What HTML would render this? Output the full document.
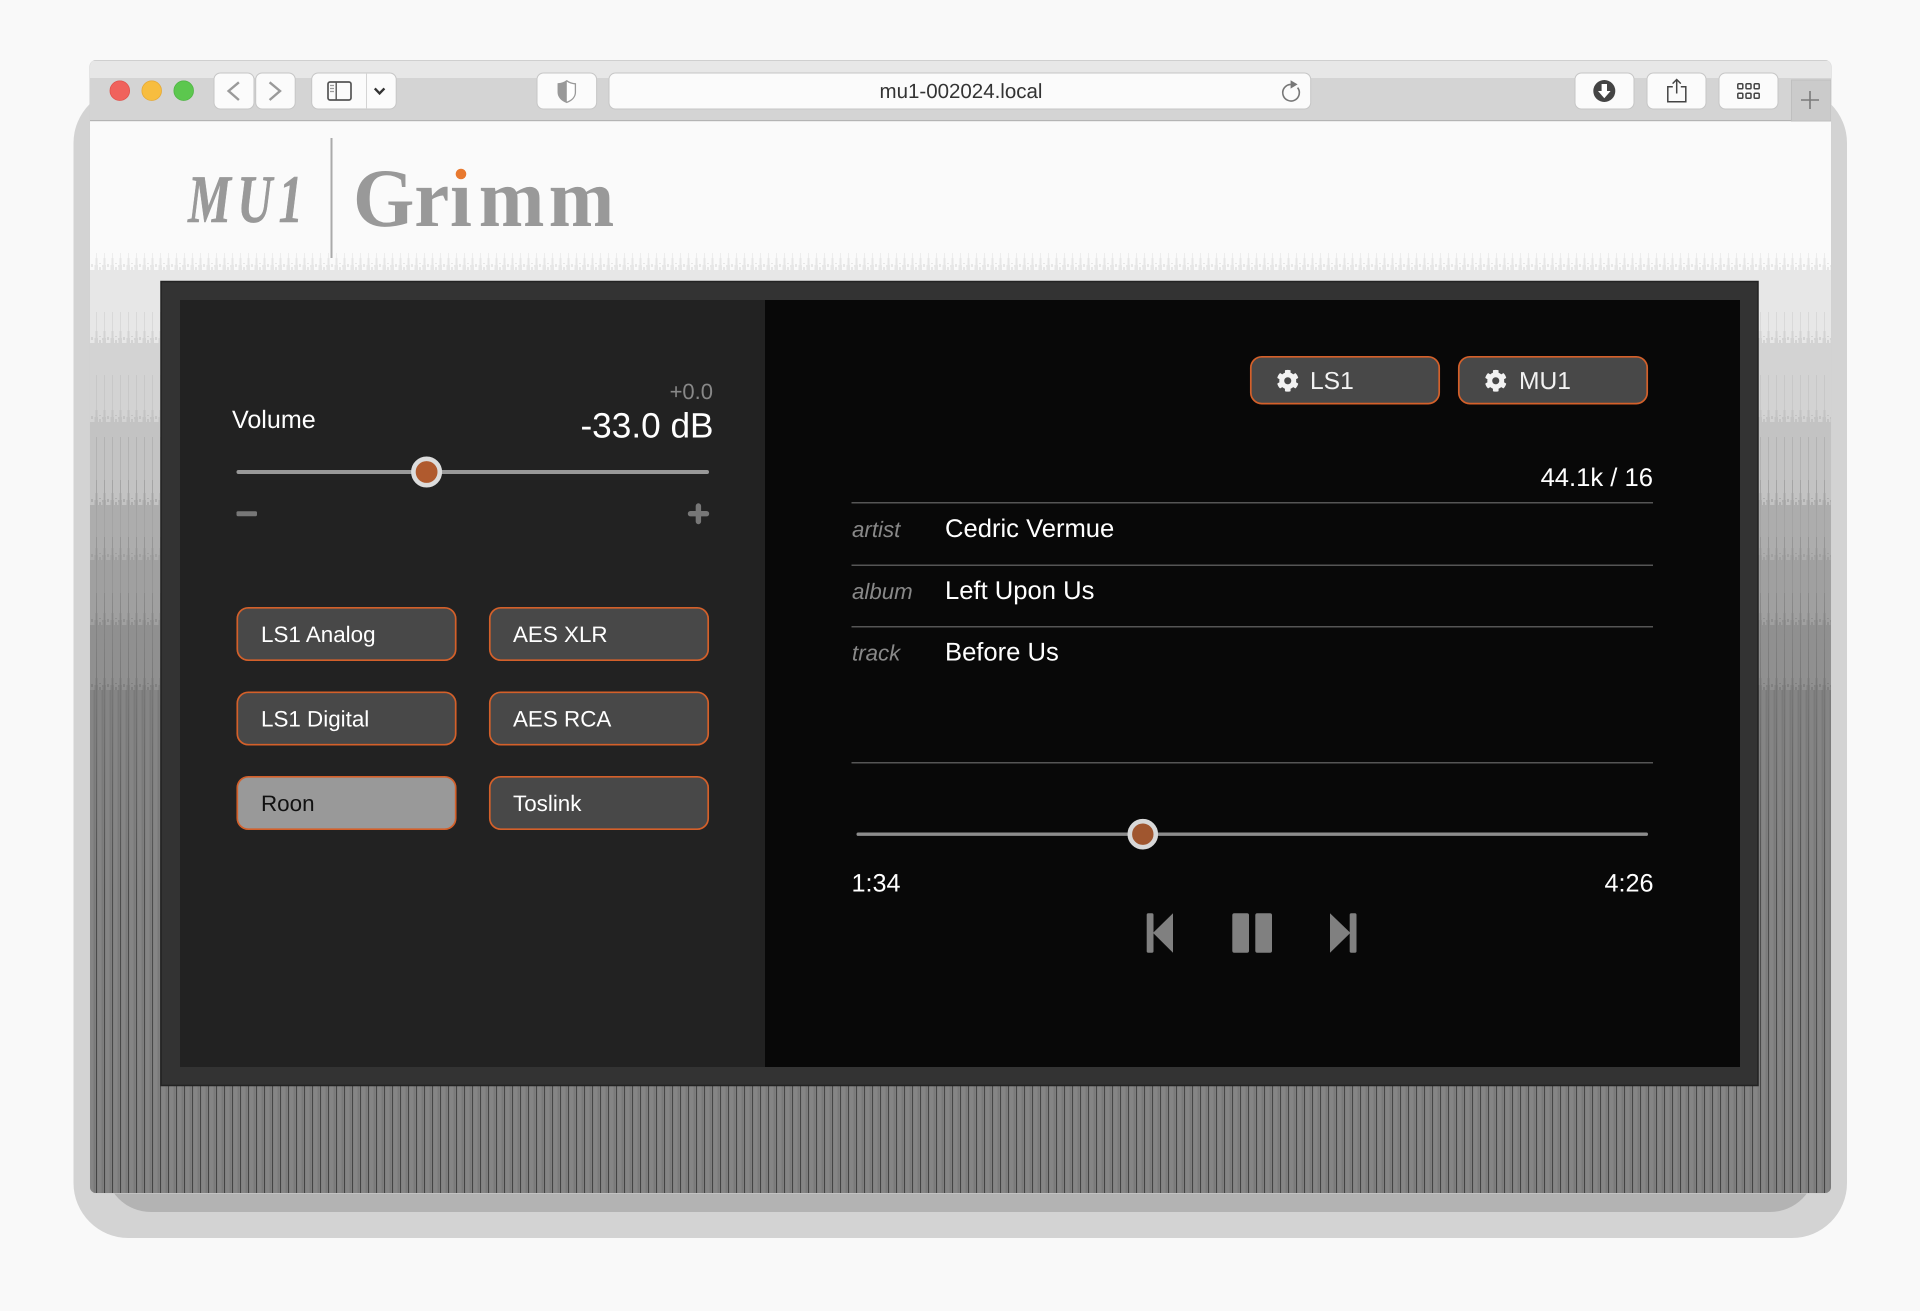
<!DOCTYPE html>
<html><head><meta charset="utf-8"><title>mu1-002024.local</title>
<style>
html,body{margin:0;padding:0;background:#f9f9f9;width:1920px;height:1311px;overflow:hidden}
svg{display:block}
text{font-family:"Liberation Sans",Arial,sans-serif;text-rendering:geometricPrecision}
.s{font-family:"Liberation Serif","Times New Roman",serif}
</style></head><body>
<svg xmlns="http://www.w3.org/2000/svg" width="1920" height="1311" viewBox="0 0 1920 1311">
<defs>
<clipPath id="win"><rect x="90" y="60" width="1741" height="1133" rx="6"/></clipPath>
<pattern id="w1" x="90" y="0" width="8" height="8" patternUnits="userSpaceOnUse"><rect x="6" width="1" height="8" fill="#fff" fill-opacity=".7"/></pattern>
<pattern id="w2" x="90" y="0" width="8" height="8" patternUnits="userSpaceOnUse"><rect x="5.5" width="2" height="8" fill="#fff"/></pattern>
<pattern id="w4" x="90" y="0" width="8" height="8" patternUnits="userSpaceOnUse"><rect x="4.5" width="3.5" height="8" fill="#fff"/></pattern>
<pattern id="nz" x="90" y="0" width="16" height="6" patternUnits="userSpaceOnUse"><rect x="1" y="0" width="2" height="3" fill="#fff"/><rect x="9" y="3" width="2" height="3" fill="#fff"/><rect x="12" y="1" width="2" height="2" fill="#fff"/></pattern>
<pattern id="full" x="90" y="0" width="8" height="8" patternUnits="userSpaceOnUse"><rect x="6" width="1" height="8" fill="#fff"/></pattern>
<pattern id="cell" x="90" y="0" width="8" height="8" patternUnits="userSpaceOnUse"><rect x="0" width="3.5" height="8" fill="#858585"/><rect x="3.5" width="1.5" height="8" fill="#797979"/><rect x="5" width="1" height="8" fill="#7e7e7e"/></pattern>
<mask id="j" maskUnits="userSpaceOnUse" x="90" y="-140" width="1741" height="140">
<rect x="90" y="-140" width="1741" height="140" fill="url(#w1)"/>
<rect x="90" y="-12" width="1741" height="12" fill="url(#w2)"/>
<rect x="90" y="-5" width="1741" height="5" fill="url(#w4)"/>
<rect x="90" y="-7" width="1741" height="7" fill="url(#nz)"/>
</mask>
<mask id="lines" maskUnits="userSpaceOnUse" x="90" y="560" width="1741" height="640"><rect x="90" y="560" width="1741" height="640" fill="url(#full)"/></mask>
<linearGradient id="dk" x1="0" y1="590" x2="0" y2="1193" gradientUnits="userSpaceOnUse">
<stop offset="0" stop-color="#8c8c8c"/><stop offset=".17" stop-color="#767676"/><stop offset=".36" stop-color="#5e5e5e"/><stop offset=".5" stop-color="#4c4c4c"/><stop offset="1" stop-color="#444"/>
</linearGradient>
</defs>

<!-- shadows -->
<rect x="73.5" y="88" width="1773.5" height="1150" rx="55" fill="#d3d3d3"/>
<rect x="105" y="1000" width="1711" height="212" rx="46" fill="#b3b3b3"/>

<!-- window -->
<rect x="89.5" y="60" width="1742" height="1133.5" rx="6.5" fill="#d0d0d0"/>
<g clip-path="url(#win)">
<rect x="90" y="121" width="1741" height="1072" fill="#fafafa"/>
<!-- bands -->
<rect x="90" y="270" width="1741" height="73" fill="#e7e7e7"/>
<rect x="90" y="343" width="1741" height="79" fill="#d3d3d3"/>
<rect x="90" y="422" width="1741" height="83" fill="#c3c3c3"/>
<rect x="90" y="505" width="1741" height="55" fill="#adadad"/>
<rect x="90" y="560" width="1741" height="65" fill="#a0a0a0"/>
<rect x="90" y="625" width="1741" height="65" fill="#909090"/>
<rect x="90" y="690" width="1741" height="503" fill="#808080"/>
<rect x="90" y="690" width="1741" height="503" fill="url(#cell)" opacity=".9"/>
<!-- band stripes -->
<g transform="translate(0,270)"><rect x="90" y="-17" width="1741" height="17" fill="#e7e7e7" mask="url(#j)"/></g>
<g transform="translate(0,343)"><rect x="90" y="-31" width="1741" height="31" fill="#d3d3d3" mask="url(#j)"/></g>
<g transform="translate(0,422)"><rect x="90" y="-47" width="1741" height="47" fill="#c3c3c3" mask="url(#j)"/></g>
<g transform="translate(0,505)"><rect x="90" y="-68" width="1741" height="68" fill="#adadad" mask="url(#j)"/></g>
<g transform="translate(0,560)"><rect x="90" y="-80" width="1741" height="80" fill="#a0a0a0" mask="url(#j)"/></g>
<g transform="translate(0,625)"><rect x="90" y="-88" width="1741" height="88" fill="#909090" mask="url(#j)"/></g>
<g transform="translate(0,690)"><rect x="90" y="-97" width="1741" height="97" fill="#808080" mask="url(#j)"/></g>
<rect x="90" y="593" width="1741" height="600" fill="url(#dk)" mask="url(#lines)"/>

<!-- toolbar -->
<rect x="90" y="60" width="1741" height="61" fill="#d4d4d4"/>
<rect x="90" y="60" width="1741" height="18" fill="#e7e7e7"/>
<rect x="90" y="60" width="1741" height="1" fill="#cfcfcf"/>
<rect x="90" y="120" width="1741" height="1.2" fill="#b4b4b4"/>
<rect x="1791.5" y="80" width="39.5" height="41" fill="#cbcbcb" stroke="#bfbfbf" stroke-width="1"/>
<path d="M1801 100h18M1810 91v18" stroke="#7a7a7a" stroke-width="1.6" fill="none"/>
</g>

<!-- traffic lights -->
<circle cx="119.8" cy="90.7" r="9.8" fill="#f0625c" stroke="#e0524c" stroke-width=".8"/>
<circle cx="151.7" cy="90.7" r="9.8" fill="#f7bd3f" stroke="#e6a935" stroke-width=".8"/>
<circle cx="183.7" cy="90.7" r="9.8" fill="#5cc74e" stroke="#4fb544" stroke-width=".8"/>

<!-- toolbar buttons -->
<g fill="#fbfbfb" stroke="#c6c6c6" stroke-width="1">
<rect x="214" y="73" width="40" height="36" rx="6.5"/>
<rect x="255.7" y="73" width="39.5" height="36" rx="6.5"/>
<rect x="311.7" y="73" width="84.5" height="36" rx="6.5"/>
<rect x="537" y="73" width="59.6" height="36" rx="6.5"/>
<rect x="609" y="73" width="701.7" height="36" rx="6.5"/>
<rect x="1575" y="73" width="59" height="36" rx="6.5"/>
<rect x="1647" y="73" width="59" height="36" rx="6.5"/>
<rect x="1719" y="73" width="59" height="36" rx="6.5"/>
</g>
<path d="M366.5 73v36" stroke="#d4d4d4" stroke-width="1"/>
<path d="M238.9 82.3L228.6 91l10.3 9M269.6 82.3L280 91l-10.4 9" fill="none" stroke="#9a9a9a" stroke-width="2.4"/>
<rect x="328" y="82" width="23" height="18" rx="2" fill="none" stroke="#555" stroke-width="1.7"/>
<path d="M336.2 82v18" stroke="#555" stroke-width="1.4"/>
<path d="M330 85.5h4M330 88.5h4M330 91.5h4" stroke="#999" stroke-width="1.3"/>
<path d="M374.8 88.4l4.8 5 4.8-5" fill="none" stroke="#333" stroke-width="2.4"/>
<path d="M566.8 80.8c-2.6 2-5.6 2.8-8.6 3v8.6c0 4.4 3.4 8 8.6 10 5.2-2 8.6-5.6 8.6-10v-8.6c-3-.2-6-1-8.6-3z" fill="#fff" stroke="#999" stroke-width="1.3"/>
<path d="M566.8 80.8c-2.6 2-5.6 2.8-8.6 3v8.6c0 4.4 3.4 8 8.6 10z" fill="#999"/>
<text x="961" y="98" text-anchor="middle" font-size="20.5" fill="#333">mu1-002024.local</text>
<path d="M1290.8 84.4A8.3 8.3 0 1 0 1297.6 87.6" fill="none" stroke="#777" stroke-width="1.6"/>
<path d="M1290.6 80.2l7 4.2-7 4.2z" fill="#777"/>
<circle cx="1604.3" cy="91" r="11" fill="#444"/>
<path d="M1601.6 84h5.4v7h3.6l-6.3 7.2-6.3-7.2h3.6z" fill="#fff"/>
<path d="M1672.8 86.8h-5v15h18v-15h-5" fill="none" stroke="#444" stroke-width="1.5"/>
<path d="M1676.7 80v13.5" stroke="#444" stroke-width="1.5"/>
<path d="M1672.6 83.6l4.1-4.1 4.1 4.1" fill="none" stroke="#444" stroke-width="1.5"/>
<g fill="none" stroke="#444" stroke-width="1.5">
<rect x="1737.8" y="83.7" width="5" height="5" rx="1"/><rect x="1746" y="83.7" width="5" height="5" rx="1"/><rect x="1754.2" y="83.7" width="5" height="5" rx="1"/>
<rect x="1737.8" y="93.2" width="5" height="5" rx="1"/><rect x="1746" y="93.2" width="5" height="5" rx="1"/><rect x="1754.2" y="93.2" width="5" height="5" rx="1"/>
</g>

<!-- logo -->
<g transform="translate(188,222) scale(.71,1)"><text class="s" x="0" y="0" font-size="68" font-weight="700" font-style="italic" letter-spacing="9" fill="#999" stroke="#999" stroke-width=".6">MU1</text></g>
<rect x="330.5" y="138" width="2" height="120" fill="#aaa"/>
<g transform="translate(0,226) scale(.95,1)"><text class="s" x="371.6 436 473.7 504 577.5" y="0" font-size="83" font-weight="700" fill="#999">Grimm</text></g>
<rect x="449" y="163" width="24" height="21" fill="#fafafa"/>
<circle cx="461" cy="174" r="5.3" fill="#e8792f"/>

<!-- panel -->
<rect x="161" y="281.5" width="1597" height="804" fill="#333" stroke="#232323" stroke-width="1.5"/>
<rect x="180" y="300" width="585" height="767" fill="#222"/>
<rect x="765" y="300" width="975" height="767" fill="#080808"/>

<!-- left -->
<text x="232" y="428" font-size="25.1" fill="#fff">Volume</text>
<text x="713" y="399" text-anchor="end" font-size="22" fill="#888">+0.0</text>
<text x="713.5" y="437.5" text-anchor="end" font-size="35.2" fill="#fff">-33.0 dB</text>
<rect x="236.5" y="470" width="472.5" height="4" rx="2" fill="#999"/>
<circle cx="426.6" cy="472" r="13.2" fill="#b05a2e" stroke="#dcdcdc" stroke-width="4.6"/>
<rect x="236.5" y="511.2" width="20.5" height="5" rx="1.4" fill="#777"/>
<path d="M698.4 506v15.5M690.5 513.7h16" stroke="#777" stroke-width="5.4" stroke-linecap="round" fill="none"/>

<g fill="#484848" stroke="#d4602a" stroke-width="1.7">
<rect x="237.3" y="607.8" width="218.4" height="52.4" rx="11"/>
<rect x="489.8" y="607.8" width="218.4" height="52.4" rx="11"/>
<rect x="237.3" y="692.3" width="218.4" height="52.4" rx="11"/>
<rect x="489.8" y="692.3" width="218.4" height="52.4" rx="11"/>
<rect x="237.3" y="776.8" width="218.4" height="52.4" rx="11" fill="#999"/>
<rect x="489.8" y="776.8" width="218.4" height="52.4" rx="11"/>
</g>
<g font-size="22.4" fill="#fff">
<text x="261" y="642">LS1 Analog</text>
<text x="513" y="642">AES XLR</text>
<text x="261" y="726.5">LS1 Digital</text>
<text x="513" y="726.5">AES RCA</text>
<text x="261" y="811" fill="#111">Roon</text>
<text x="513" y="811">Toslink</text>
</g>

<!-- right -->
<g fill="#484848" stroke="#d4602a" stroke-width="1.7">
<rect x="1250.8" y="356.8" width="188.4" height="46.8" rx="11"/>
<rect x="1458.8" y="356.8" width="188.4" height="46.8" rx="11"/>
</g>
<g fill="#f2f2f2">
<svg x="1276.5" y="369.5" width="22.5" height="22.5" viewBox="0 0 512 512"><path d="M487.4 315.7l-42.6-24.6c4.3-23.2 4.3-47 0-70.2l42.6-24.6c4.9-2.8 7.1-8.6 5.5-14-11.1-35.6-30-67.8-54.7-94.6-3.8-4.1-10-5.1-14.8-2.3L380.8 110c-17.9-15.4-38.5-27.3-60.8-35.1V25.8c0-5.6-3.9-10.5-9.4-11.7-36.7-8.2-74.3-7.8-109.2 0-5.5 1.2-9.4 6.1-9.4 11.7V75c-22.2 7.9-42.8 19.8-60.8 35.1L88.7 85.5c-4.9-2.8-11-1.9-14.8 2.3-24.7 26.7-43.6 58.9-54.7 94.6-1.7 5.4.6 11.2 5.5 14L67.3 221c-4.3 23.2-4.3 47 0 70.2l-42.6 24.6c-4.9 2.8-7.1 8.6-5.5 14 11.1 35.6 30 67.8 54.7 94.6 3.8 4.1 10 5.1 14.8 2.3l42.6-24.6c17.9 15.4 38.5 27.3 60.8 35.1v49.2c0 5.6 3.9 10.5 9.4 11.7 36.7 8.2 74.3 7.8 109.2 0 5.5-1.2 9.4-6.1 9.4-11.7v-49.2c22.2-7.9 42.8-19.8 60.8-35.1l42.6 24.6c4.9 2.8 11 1.9 14.8-2.3 24.7-26.7 43.6-58.9 54.7-94.6 1.5-5.5-.7-11.3-5.6-14.1zM256 336c-44.1 0-80-35.9-80-80s35.9-80 80-80 80 35.9 80 80-35.9 80-80 80z"/></svg>
<svg x="1484.5" y="369.5" width="22.5" height="22.5" viewBox="0 0 512 512"><path d="M487.4 315.7l-42.6-24.6c4.3-23.2 4.3-47 0-70.2l42.6-24.6c4.9-2.8 7.1-8.6 5.5-14-11.1-35.6-30-67.8-54.7-94.6-3.8-4.1-10-5.1-14.8-2.3L380.8 110c-17.9-15.4-38.5-27.3-60.8-35.1V25.8c0-5.6-3.9-10.5-9.4-11.7-36.7-8.2-74.3-7.8-109.2 0-5.5 1.2-9.4 6.1-9.4 11.7V75c-22.2 7.9-42.8 19.8-60.8 35.1L88.7 85.5c-4.9-2.8-11-1.9-14.8 2.3-24.7 26.7-43.6 58.9-54.7 94.6-1.7 5.4.6 11.2 5.5 14L67.3 221c-4.3 23.2-4.3 47 0 70.2l-42.6 24.6c-4.9 2.8-7.1 8.6-5.5 14 11.1 35.6 30 67.8 54.7 94.6 3.8 4.1 10 5.1 14.8 2.3l42.6-24.6c17.9 15.4 38.5 27.3 60.8 35.1v49.2c0 5.6 3.9 10.5 9.4 11.7 36.7 8.2 74.3 7.8 109.2 0 5.5-1.2 9.4-6.1 9.4-11.7v-49.2c22.2-7.9 42.8-19.8 60.8-35.1l42.6 24.6c4.9 2.8 11 1.9 14.8-2.3 24.7-26.7 43.6-58.9 54.7-94.6 1.5-5.5-.7-11.3-5.6-14.1zM256 336c-44.1 0-80-35.9-80-80s35.9-80 80-80 80 35.9 80 80-35.9 80-80 80z"/></svg>
</g>
<text x="1310" y="388.8" font-size="24.6" fill="#f2f2f2">LS1</text>
<text x="1519" y="388.8" font-size="24.6" fill="#f2f2f2">MU1</text>
<text x="1653" y="486" text-anchor="end" font-size="25.6" fill="#fff">44.1k / 16</text>
<g fill="#555">
<rect x="851.5" y="502" width="801.5" height="1.5"/>
<rect x="851.5" y="564.5" width="801.5" height="1.5"/>
<rect x="851.5" y="626" width="801.5" height="1.5"/>
<rect x="851.5" y="762" width="801.5" height="1.5"/>
</g>
<g font-size="22.3" font-style="italic" fill="#888">
<text x="852" y="537">artist</text>
<text x="852" y="599">album</text>
<text x="852" y="660.5">track</text>
</g>
<g font-size="25.6" fill="#fff">
<text x="945" y="537">Cedric Vermue</text>
<text x="945" y="599">Left Upon Us</text>
<text x="945" y="660.5">Before Us</text>
</g>
<rect x="856.5" y="832.5" width="791.5" height="3.4" rx="1.7" fill="#8c8c8c"/>
<circle cx="1142.8" cy="834.2" r="13" fill="#a0562f" stroke="#d8d8d8" stroke-width="4.6"/>
<text x="851.5" y="891.7" font-size="25.2" fill="#fff">1:34</text>
<text x="1653.5" y="891.7" text-anchor="end" font-size="25.2" fill="#fff">4:26</text>
<g fill="#808080">
<rect x="1146.7" y="913.3" width="6.8" height="39.4" rx="1.6"/>
<path d="M1153 932.9L1173 913.2v39.5z"/>
<rect x="1232.3" y="913.3" width="16.7" height="39.4" rx="2"/>
<rect x="1255.3" y="913.3" width="16.7" height="39.4" rx="2"/>
<path d="M1330 913.2v39.5L1350.4 932.9z"/>
<rect x="1349.7" y="913.3" width="6.8" height="39.4" rx="1.6"/>
</g>
</svg>
</body></html>
